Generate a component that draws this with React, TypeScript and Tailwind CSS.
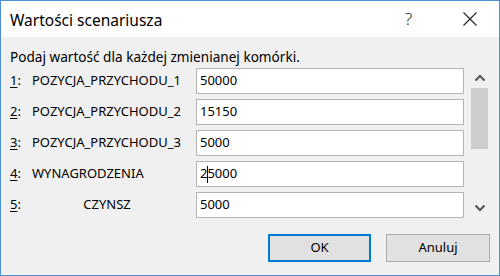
import React from "react";

const rows = [
  { n: "1", label: "POZYCJA_PRZYCHODU_1", value: "50000", center: false },
  { n: "2", label: "POZYCJA_PRZYCHODU_2", value: "15150", center: false },
  { n: "3", label: "POZYCJA_PRZYCHODU_3", value: "5000", center: false },
  { n: "4", label: "WYNAGRODZENIA", value: "25000", center: false, cursor: true },
  { n: "5", label: "CZYNSZ", value: "5000", center: true },
];

export default function App() {
  return (
    <div
      className="w-[500px] h-[276px] border border-[#4a90d2] flex flex-col text-[#000] overflow-hidden"
      style={{ fontFamily: '"Noto Sans", "Open Sans", sans-serif' }}
    >
      <div className="h-[36px] bg-white flex items-center shrink-0">
        <div className="pl-[9px] text-[15.5px] leading-[20px] pt-[1px] flex-1">Wartości scenariusza</div>
        <div className="w-[16px] text-[17px] font-light text-[#222] leading-[20px] mr-[41px]">?</div>
        <svg width="16" height="16" viewBox="0 0 16 16" className="mr-[21px]">
          <path d="M1.5 1.5 L14.5 14.5 M14.5 1.5 L1.5 14.5" stroke="#222" strokeWidth="1.1" fill="none" />
        </svg>
      </div>
      <div className="flex-1 bg-[#f0f0f0] flex flex-col">
        <div className="pl-[9px] pt-[11px] text-[13.6px] leading-[18px]">
          Podaj wartość dla każdej zmienianej komórki.
        </div>
        <div className="flex mt-[2px]">
          <div className="flex flex-col gap-[5px]">
            {rows.map((r) => (
              <div key={r.n} className="flex items-center h-[26px] text-[13px]">
                <div className="w-[31px] pl-[9px]">
                  <span className="underline underline-offset-2">{r.n}</span>:
                </div>
                <div className={"w-[164px] " + (r.center ? "text-center pr-[14px]" : "")}>{r.label}</div>
                <div className="w-[268px] h-[26px] bg-white border border-[#b4b4b4] flex items-center pl-[3px] text-[13px]">
                  {r.cursor ? (
                    <>
                      <span>2</span>
                      <span className="inline-block w-px h-[17px] bg-black -mr-px" />
                      <span>5000</span>
                    </>
                  ) : (
                    r.value
                  )}
                </div>
              </div>
            ))}
          </div>
          <div className="ml-[6px] w-[19px] h-[150px] flex flex-col">
            <div className="h-[20px] flex items-center justify-center">
              <svg width="12" height="8" viewBox="0 0 12 8">
                <polyline points="1.5,6.5 6,2 10.5,6.5" stroke="#555" strokeWidth="2" fill="none" />
              </svg>
            </div>
            <div className="h-[61px] mx-[1px] bg-[#cdcdcd]" />
            <div className="flex-1" />
            <div className="h-[20px] flex items-center justify-center">
              <svg width="12" height="8" viewBox="0 0 12 8">
                <polyline points="1.5,1.5 6,6 10.5,1.5" stroke="#555" strokeWidth="2" fill="none" />
              </svg>
            </div>
          </div>
        </div>
        <div className="flex justify-end gap-[15px] pr-[9px] mt-[16px]">
          <button className="w-[103px] h-[28px] bg-[#e1e1e1] border-2 border-[#0078d7] text-[13px] flex items-center justify-center">
            OK
          </button>
          <button className="w-[104px] h-[28px] bg-[#e1e1e1] border border-[#adadad] text-[13px] flex items-center justify-center">
            Anuluj
          </button>
        </div>
      </div>
    </div>
  );
}
